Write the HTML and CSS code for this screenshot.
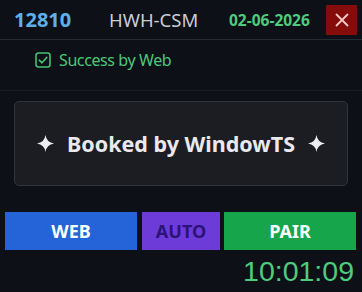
FILE: index.html
```html
<!DOCTYPE html>
<html>
<head>
<meta charset="utf-8">
<link rel="stylesheet" href="styles.css">
</head>
<body>
<div class="app">
  <div class="header">
    <span class="train">12810</span>
    <span class="station">HWH-CSM</span>
    <span class="date">02-06-2026</span>
    <button class="close" aria-label="Close">
      <svg width="14" height="14" viewBox="0 0 14 14"><path d="M1.5 1.5 L12.5 12.5 M12.5 1.5 L1.5 12.5" stroke="#f3c9c9" stroke-width="1.8" stroke-linecap="round"/></svg>
    </button>
  </div>
  <div class="status">
    <svg class="check" width="16" height="16" viewBox="0 0 16 16"><rect x="1" y="1" width="14" height="14" rx="2.5" fill="none" stroke="#45c072" stroke-width="1.6"/><path d="M4.3 8.2 L7 10.8 L11.8 5.4" fill="none" stroke="#45c072" stroke-width="1.6" stroke-linecap="round" stroke-linejoin="round"/></svg>
    <span class="status-text">Success by Web</span>
  </div>
  <div class="card">
    <svg class="star" width="17" height="17" viewBox="0 0 16 16"><path d="M8 0 Q9 7 16 8 Q9 9 8 16 Q7 9 0 8 Q7 7 8 0Z" fill="#ececf2"/></svg>
    <span class="booked">Booked by WindowTS</span>
    <svg class="star" width="17" height="17" viewBox="0 0 16 16"><path d="M8 0 Q9 7 16 8 Q9 9 8 16 Q7 9 0 8 Q7 7 8 0Z" fill="#ececf2"/></svg>
  </div>
  <div class="buttons">
    <div class="btn web">WEB</div>
    <div class="btn auto">AUTO</div>
    <div class="btn pair">PAIR</div>
  </div>
  <div class="clock">10:01:09</div>
</div>
</body>
</html>
```
FILE: styles.css
```css
html, body {
  margin: 0;
  padding: 0;
  background: #0d1017;
}
.app {
  width: 362px;
  height: 292px;
  overflow: hidden;
  font-family: "Noto Sans", "Open Sans", sans-serif;
}
.header {
  height: 39px;
  border-bottom: 1px solid #272b33;
  display: flex;
  align-items: center;
  padding: 0 5px 0 14px;
  box-sizing: content-box;
}
.train {
  color: #5db0ec;
  font-weight: 700;
  font-size: 20px;
  width: 95px;
}
.station {
  color: #c9ccd4;
  font-size: 18.5px;
  width: 120px;
}
.date {
  color: #4fcb7e;
  font-weight: 700;
  font-size: 15.5px;
  width: 97px;
}
.close {
  width: 31px;
  height: 30px;
  border: 0;
  padding: 0;
  background: #860b0b;
  display: flex;
  align-items: center;
  justify-content: center;
}
.status {
  border-bottom: 1px solid #181c24;
  display: flex;
  align-items: center;
  padding-left: 35px;
  padding-bottom: 10px;
  box-sizing: border-box;
  height: 51px;
}
.check {
  margin-right: 8px;
}
.status-text {
  color: #4cc87a;
  font-size: 16px;
  letter-spacing: -0.4px;
}
.card {
  margin: 10px 14px 0 14px;
  height: 85px;
  box-sizing: border-box;
  background: #1c1d22;
  border: 1px solid #32343a;
  border-radius: 5px;
  display: flex;
  align-items: center;
  justify-content: center;
  gap: 13px;
  color: #e9e9ef;
}
.booked {
  font-weight: 700;
  font-size: 21.5px;
}
.buttons {
  display: flex;
  margin: 26px 6px 0 5px;
  gap: 5px;
  height: 38px;
}
.btn {
  display: flex;
  align-items: center;
  justify-content: center;
  font-weight: 700;
  font-size: 18px;
}
.web {
  width: 132px;
  background: #2563d8;
  color: #ffffff;
}
.auto {
  width: 78px;
  background: #6d3bd7;
  color: #2c1377;
  margin-right: -1px;
}
.pair {
  flex: 1;
  background: #17a54c;
  color: #ffffff;
}
.clock {
  text-align: right;
  padding-right: 8px;
  color: #4fcb7e;
  font-family: "Liberation Sans", Arial, sans-serif;
  font-size: 28.5px;
  line-height: 30px;
  margin-top: 6px;
}
```
